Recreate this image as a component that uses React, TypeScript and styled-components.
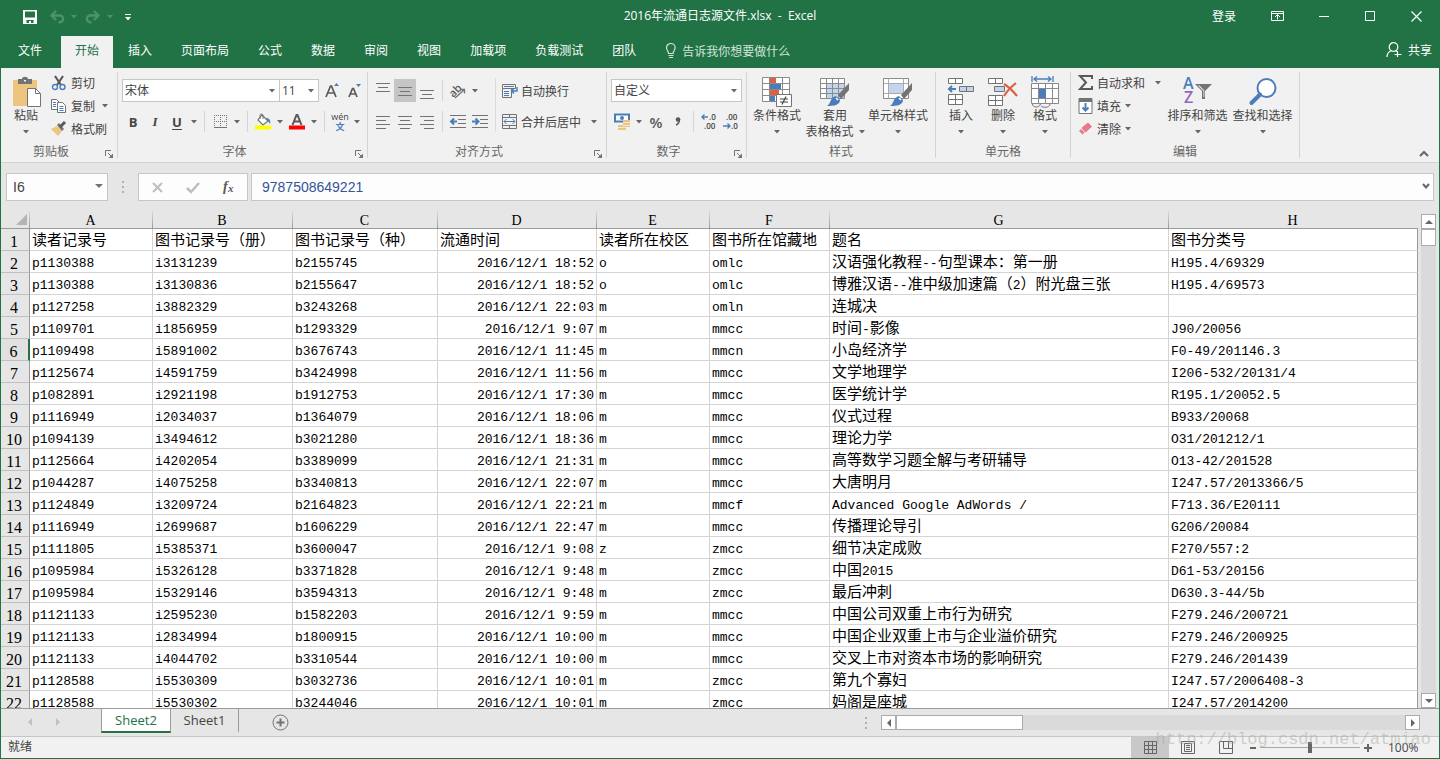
import React from "react";
import styled, { createGlobalStyle, css } from "styled-components";

const GREEN = "#217346";
const UI_FONT = `"Open Sans", "Noto Sans CJK SC", sans-serif`;
const CELL_FONT = `"Liberation Mono", "Noto Sans CJK SC", monospace`;

const GlobalStyle = createGlobalStyle`
  *, *::before, *::after { box-sizing: border-box; }
  body { margin: 0; background: #e6e6e6; font-family: ${UI_FONT}; font-size: 12px; color: #444; }
  button, select, input { font: inherit; color: inherit; }
  svg { flex: none; overflow: visible; }
`;

const Window = styled.div`
  display: flex;
  flex-direction: column;
  height: 100vh;
  border: 1px solid ${GREEN};
  border-top: 0;
  background: #e6e6e6;
  overflow: hidden;
`;

const plainButton = css`
  display: flex;
  align-items: center;
  justify-content: center;
  border: 0;
  padding: 0;
  background: none;
  white-space: nowrap;
`;

/* ---------- title bar ---------- */

const TitleBar = styled.header`
  display: grid;
  grid-template-columns: 1fr auto 1fr;
  align-items: center;
  height: 34px;
  background: ${GREEN};
  color: #fff;
`;

const QuickAccess = styled.div`
  display: flex;
  align-items: center;
  padding-left: 16px;
`;

const QuickButton = styled.button<{ $w: number; $dim?: boolean }>`
  ${plainButton}
  width: ${(p) => p.$w}px;
  height: 24px;
  color: ${(p) => (p.$dim ? "#4f916b" : "#fff")};
`;

const Title = styled.h1`
  margin: 0;
  font-size: 12px;
  font-weight: 400;
  line-height: 32px;
  height: 34px;
  white-space: pre;
`;

const WindowControls = styled.div`
  display: flex;
  justify-content: flex-end;
  height: 32px;
  align-self: start;
`;

const WindowButton = styled.button<{ $w?: number }>`
  ${plainButton}
  width: ${(p) => p.$w ?? 46}px;
  height: 32px;
  color: #fff;
`;

/* ---------- tabs ---------- */

const TabBar = styled.nav`
  display: flex;
  align-items: stretch;
  height: 34px;
  padding: 2px 7px 0 3px;
  background: ${GREEN};
`;

const Tab = styled.button<{ $active?: boolean; $first?: boolean }>`
  ${plainButton}
  margin-right: ${(p) => (p.$first ? 5 : 1)}px;
  padding: 0 14px 4px;
  background: ${(p) => (p.$active ? "#f1f1f1" : "transparent")};
  color: ${(p) => (p.$active ? GREEN : "#fff")};
`;

const TellMe = styled.button`
  ${plainButton}
  gap: 5px;
  margin-left: 14px;
  padding-bottom: 3px;
  color: #d3e3da;
`;

const Share = styled.button`
  ${plainButton}
  gap: 6px;
  margin-left: auto;
  padding-bottom: 4px;
  color: #fff;
`;

/* ---------- ribbon ---------- */

const Ribbon = styled.section`
  display: flex;
  position: relative;
  height: 95px;
  padding-top: 4px;
  background: #f1f1f1;
  border-bottom: 1px solid #d2d2d2;
`;

const GroupBox = styled.div<{ $w: number }>`
  display: flex;
  flex-direction: column;
  flex: none;
  position: relative;
  width: ${(p) => p.$w}px;
  height: 86px;
  border-right: 1px solid #d4d4d4;
`;

const GroupBody = styled.div<{ $pad?: number }>`
  display: flex;
  flex: none;
  height: 72px;
  padding-left: ${(p) => p.$pad ?? 0}px;
`;

const GroupLabel = styled.div<{ $launcher?: boolean }>`
  padding-right: ${(p) => (p.$launcher ? 16 : 0)}px;
  line-height: 16px;
  text-align: center;
  color: #666;
`;

const Launcher = styled.button`
  ${plainButton}
  position: absolute;
  right: 4px;
  bottom: 0;
  width: 8px;
  height: 8px;
`;

const Rows = styled.div`
  display: flex;
  flex-direction: column;
  gap: 8px;
  padding-top: 7px;
`;

const Row = styled.div`
  display: flex;
  align-items: center;
  height: 23px;
`;

const Stack = styled.div<{ $w: number }>`
  display: flex;
  flex-direction: column;
  flex: none;
  width: ${(p) => p.$w}px;
`;

const SmallButton = styled.button<{ $spread?: boolean }>`
  ${plainButton}
  justify-content: flex-start;
  gap: 4px;
  height: 23px;
  padding: 0 4px 2px 0;
  & > svg:last-child { margin-left: ${(p) => (p.$spread ? "auto" : "0")}; }
`;

const ToolButton = styled.button<{ $on?: boolean; $w?: number }>`
  ${plainButton}
  width: ${(p) => p.$w ?? 22}px;
  height: 23px;
  background: ${(p) => (p.$on ? "#c5c5c5" : "none")};
`;

const TextTool = styled(ToolButton)<{ $italic?: boolean; $under?: boolean }>`
  font-size: 13px;
  font-weight: 700;
  font-style: ${(p) => (p.$italic ? "italic" : "normal")};
  font-family: ${(p) => (p.$italic ? `"Liberation Serif", serif` : UI_FONT)};
  text-decoration: ${(p) => (p.$under ? "underline" : "none")};
  text-underline-offset: 2px;
`;

const PercentTool = styled(ToolButton)`
  font-size: 15px;
  font-weight: 600;
  color: #595959;
`;

const WideTool = styled.button`
  ${plainButton}
  height: 23px;
  & > svg:first-child { margin: 0 4px 0 3px; }
  & > svg:last-child:not(:first-child) { margin-left: 10px; }
`;

const WideLabel = styled.span`
  display: inline-block;
`;

const Sep = styled.span`
  flex: none;
  width: 1px;
  height: 21px;
  margin: 0 4px;
  background: #d4d4d4;
`;

const TallSep = styled.span`
  flex: none;
  width: 1px;
  height: 54px;
  margin: 6px 3px 0 4px;
  background: #dcdcdc;
`;

const SelectBox = styled.label<{ $w: number; $joined?: boolean }>`
  position: relative;
  width: ${(p) => p.$w}px;
  height: 23px;
  margin-left: ${(p) => (p.$joined ? -1 : 0)}px;
  & > svg { position: absolute; right: 5px; top: 10px; pointer-events: none; }
`;

const Select = styled.select`
  appearance: none;
  width: 100%;
  height: 100%;
  padding: 0 2px;
  border: 1px solid #c6c6c6;
  border-radius: 0;
  background: #fff;
`;

const BigButton = styled.button<{ $w: number }>`
  ${plainButton}
  flex: none;
  flex-direction: column;
  justify-content: flex-start;
  width: ${(p) => p.$w}px;
  height: 72px;
  padding-top: 3px;
`;

const BigIcon = styled.span`
  display: flex;
  align-items: center;
  justify-content: center;
  height: 33px;
`;

const BigLine = styled.span`
  display: flex;
  align-items: center;
  gap: 5px;
  height: 16px;
  line-height: 16px;
`;

const Collapse = styled.button`
  ${plainButton}
  position: absolute;
  right: 9px;
  bottom: 4px;
  width: 12px;
  height: 8px;
`;

/* ---------- formula bar ---------- */

const FormulaBar = styled.div`
  display: flex;
  align-items: center;
  flex: none;
  height: 48px;
  padding: 0 5px;
`;

const NameBox = styled.label`
  position: relative;
  width: 102px;
  height: 28px;
  & > svg { position: absolute; right: 5px; top: 9px; }
`;

const FormulaInput = styled.input<{ $pad: number }>`
  width: 100%;
  height: 28px;
  padding: 0 ${(p) => p.$pad}px;
  border: 1px solid #c6c6c6;
  background: #fdfdfd;
  color: ${(p) => (p.$pad > 8 ? "#35539a" : "#444")};
  font-family: "Liberation Sans", sans-serif;
  font-size: 14px;
`;

const Grip = styled.span`
  display: flex;
  justify-content: center;
  width: 30px;
`;

const FormulaTools = styled.div`
  display: flex;
  align-items: center;
  width: 110px;
  height: 28px;
  margin-right: 3px;
  border: 1px solid #c6c6c6;
  background: #fdfdfd;
`;

const FormulaTool = styled(ToolButton)`
  width: 36px;
  height: 26px;
`;

const FormulaField = styled.label`
  position: relative;
  flex: 1;
  & > svg { position: absolute; right: 4px; top: 10px; }
`;

/* ---------- grid ---------- */

const GridArea = styled.main`
  display: flex;
  flex: 1;
  min-height: 0;
  border-bottom: 1px solid #9b9b9b;
  overflow: hidden;
`;

const GridClip = styled.div`
  flex: 1;
  min-width: 0;
  overflow: hidden;
`;

const Table = styled.table`
  width: 100%;
  table-layout: fixed;
  border-collapse: separate;
  border-spacing: 0;
  font-family: ${CELL_FONT};
  font-size: 13px;
  color: #000;
`;

const ColHead = styled.th`
  height: 18px;
  padding: 0 2px 0 0;
  border-bottom: 1px solid #9b9b9b;
  background: linear-gradient(#dcdcdc, #9b9b9b) right / 1px 100% no-repeat #e6e6e6;
  font-weight: 400;
  font-family: "Liberation Serif", serif;
  font-size: 14px;
  line-height: 14px;
  vertical-align: bottom;
  &:last-child { background: #e6e6e6; }
`;

const Corner = styled(ColHead)`
  padding: 0 3px 3px 0;
  text-align: right;
  & > svg { display: block; margin-left: auto; }
`;

const RowHead = styled.th<{ $active?: boolean }>`
  height: 22px;
  padding: 4px 2px 0 0;
  border-right: ${(p) => (p.$active ? `2px solid ${GREEN}` : "1px solid #9b9b9b")};
  border-bottom: 1px solid #c0c0c0;
  background: ${(p) => (p.$active ? "#e1e1e1" : "#e6e6e6")};
  font-weight: 400;
  font-family: "Liberation Serif", serif;
  font-size: 16px;
  line-height: 17px;
`;

const Cell = styled.td<{ $right?: boolean }>`
  height: 22px;
  padding: 4px 2px 0;
  border-right: 1px solid #d4d4d4;
  border-bottom: 1px solid #d4d4d4;
  background: #fff;
  line-height: 17px;
  white-space: pre;
  overflow: hidden;
  text-align: ${(p) => (p.$right ? "right" : "left")};
  &:last-child { border-right-color: #9b9b9b; }
`;

const Han = styled.span`
  font-size: 15px;
`;

const VScroll = styled.div`
  display: flex;
  flex-direction: column;
  flex: none;
  width: 15px;
  margin: 3px 3px 0 3px;
  background: #dadada;
`;

const ScrollButton = styled.button`
  ${plainButton}
  flex: none;
  width: 15px;
  height: 15px;
  border: 1px solid #ababab;
  background: #fff;
  &:last-child { margin-left: auto; }
`;

const VThumb = styled.div`
  height: 17px;
  margin-bottom: auto;
  border: 1px solid #ababab;
  background: #fff;
`;

/* ---------- sheet tabs + status bar ---------- */

const SheetBar = styled.div`
  display: flex;
  flex: none;
  height: 28px;
  border-bottom: 1px solid #c6c6c6;
`;

const SheetNav = styled.div`
  display: flex;
  align-items: center;
  width: 100px;
  padding: 0 0 2px 15px;
`;

const NavButton = styled.button`
  ${plainButton}
  width: 28px;
  height: 20px;
`;

const SheetTab = styled.button<{ $active?: boolean }>`
  ${plainButton}
  width: ${(p) => (p.$active ? 70 : 68)}px;
  height: 24px;
  border-right: 1px solid #9b9b9b;
  border-left: ${(p) => (p.$active ? "1px solid #9b9b9b" : "0")};
  border-bottom: 2px solid ${(p) => (p.$active ? GREEN : "transparent")};
  background: ${(p) => (p.$active ? "#fff" : "none")};
  color: ${(p) => (p.$active ? GREEN : "#444")};
  font-size: 13px;
`;

const AddSheet = styled.button`
  ${plainButton}
  width: 18px;
  margin-left: 32px;
`;

const HScroll = styled.div`
  display: flex;
  width: 539px;
  height: 15px;
  margin: 6px 19px 0 14px;
  background: #dadada;
`;

const HGrip = styled.span`
  display: flex;
  align-items: center;
  margin-left: auto;
`;

const HThumb = styled.div`
  width: 127px;
  border: 1px solid #ababab;
  background: #fff;
`;

const StatusBar = styled.footer`
  display: flex;
  align-items: center;
  flex: none;
  position: relative;
  height: 21px;
  padding-left: 7px;
  background: #f1f1f1;
`;

const StatusText = styled.span`
  padding-bottom: 3px;
`;

const Views = styled.div`
  display: flex;
  margin-left: auto;
`;

const ViewButton = styled(ToolButton)`
  width: 38px;
  height: 21px;
  background: ${(p) => (p.$on ? "#c8c8c8" : "none")};
`;

const ZoomButton = styled(ToolButton)`
  width: 15px;
  height: 21px;
`;

const ZoomRange = styled.input`
  appearance: none;
  width: 100px;
  height: 16px;
  margin: 0;
  background: linear-gradient(#a6a6a6, #a6a6a6) center / 100% 1px no-repeat;
  &::-webkit-slider-thumb {
    appearance: none;
    width: 4px;
    height: 11px;
    background: #666;
  }
`;

const ZoomValue = styled.span`
  width: 64px;
  padding-left: 13px;
`;

const Watermark = styled.span`
  position: absolute;
  right: 8px;
  top: -8px;
  font: 17px/22px "Liberation Mono", monospace;
  color: rgba(170, 170, 160, 0.5);
  pointer-events: none;
`;

/* ---------- icons ---------- */

const G = "#737373";
const B = "#4a7ebb";

type IconProps = { w?: number; h?: number; children: React.ReactNode };
const Icon = ({ w = 16, h = 16, children }: IconProps) => (
  <svg width={w} height={h} viewBox={`0 0 ${w} ${h}`} fill="none" aria-hidden="true">
    {children}
  </svg>
);

const Caret = ({ color = "#666" }: { color?: string }) => (
  <Icon w={6} h={4}><path d="M0 0h6L3 3.5z" fill={color} /></Icon>
);
const Dots = () => (
  <Icon w={2} h={12}><path d="M0 0h2v2H0zM0 5h2v2H0zM0 10h2v2H0z" fill="#b0b0b0" /></Icon>
);
const LauncherIcon = () => (
  <Icon w={8} h={8}><path d="M.5 6V.5H6" stroke={G} /><path d="M3 3l3 3" stroke={G} /><path d="M8 3.5V8H3.5z" fill={G} /></Icon>
);
const SaveIcon = () => (
  <Icon w={14} h={14}>
    <path fillRule="evenodd" d="M0 0h14v14H0zM2 1.5v6h10v-6zM3.500 10v3H6v-2h2v2h2.500v-3z" fill="currentColor" />
  </Icon>
);
const UndoIcon = () => (
  <Icon w={15} h={14}><path d="M6 1L1.500 5.500 6 10M2 5.500h7.500c5 0 5 6.500-1 7" stroke="currentColor" strokeWidth="2.400" /></Icon>
);
const RedoIcon = () => (
  <Icon w={15} h={14}><path d="M9 1l4.500 4.500L9 10M13 5.500H5.500c-5 0-5 6.500 1 7" stroke="currentColor" strokeWidth="2.400" /></Icon>
);
const CustomizeIcon = () => (
  <Icon w={6} h={7}><path d="M0 0h6v1H0zM0 3h6L3 6.500z" fill="currentColor" /></Icon>
);
const RibbonOptionsIcon = () => (
  <Icon w={14} h={12}><path d="M.5 1.500h12v9H.5zM.5 3.500h12M6.500 9.500V5M4 7l2.500-2.500L9 7" stroke="currentColor" /></Icon>
);
const MinIcon = () => <Icon w={10} h={10}><path d="M0 5.500h10" stroke="currentColor" /></Icon>;
const MaxIcon = () => <Icon w={10} h={10}><path d="M.5.5h9v9h-9z" stroke="currentColor" /></Icon>;
const CloseIcon = () => <Icon w={11} h={11}><path d="M.5.5l10 10M10.500.5l-10 10" stroke="currentColor" strokeWidth="1.200" /></Icon>;
const BulbIcon = () => (
  <Icon w={12} h={15}><path d="M3.500 10.500C3.500 8 1.500 7.500 1.500 4.800a4.300 4.300 0 0 1 8.600 0c0 2.700-2 3.200-2 5.700zM3.500 12.500h5M4 14.500h4" stroke="currentColor" strokeWidth="1.200" /></Icon>
);
const PersonIcon = () => (
  <Icon w={16} h={16}><circle cx="7.500" cy="5" r="4.300" stroke="currentColor" strokeWidth="1.200" /><path d="M1 15c0-3 2-5.500 4.500-6.300M9.500 8.500l1.500 1M11.500 9v6M8.500 12.500h7" stroke="currentColor" strokeWidth="1.200" /></Icon>
);

const PasteIcon = () => (
  <Icon w={26} h={30}>
    <path d="M0 3h24v26H0z" fill="#ecc57f" />
    <path d="M5 2h4c0-3 6-3 6 0h4v5H5z" fill={G} />
    <path d="M11 3h2v1.500h-2z" fill="#f1f1f1" />
    <path d="M14.500 11.500h8l5 5v13h-13z" fill="#fff" stroke={G} />
    <path d="M22.500 11.500v5h5" stroke={G} />
  </Icon>
);
const CutIcon = () => (
  <Icon>
    <path d="M4 1l6 9M12 1L6 10" stroke="#595959" strokeWidth="2.200" />
    <circle cx="4" cy="12" r="2.500" stroke={B} strokeWidth="1.400" />
    <circle cx="11.500" cy="12" r="2.500" stroke={B} strokeWidth="1.400" />
  </Icon>
);
const CopyIcon = () => (
  <Icon>
    <path d="M.5 1.500h5l3 3v7h-8z" fill="#fff" stroke={G} />
    <path d="M2 4.500h3M2 6.500h3M2 8.500h3" stroke={B} />
    <path d="M6.500 4.500h5l3 3v7h-8z" fill="#fff" stroke={G} />
    <path d="M8.500 8.500h4M8.500 10.500h4M8.500 12.500h4" stroke={B} />
  </Icon>
);
const PainterIcon = () => (
  <Icon>
    <path d="M0 8l6-3 5 5-4 5z" fill="#ecc57f" />
    <path d="M6 4l2-2 5 6-2 2z" fill={G} />
    <path d="M9 6l5-5" stroke="#595959" strokeWidth="3" />
  </Icon>
);
const GrowFont = ({ down }: { down?: boolean }) => (
  <Icon w={14} h={15}>
    <path d={down ? "M1 14l3.500-8.500h1L9 14M2.500 11h5" : "M1 14L5.500 3h1L11 14M3 10h6"} stroke="#595959" strokeWidth="1.700" />
    <path d={down ? "M8 1h5l-2.500 3z" : "M9 3h5l-2.500-3z"} fill={B} />
  </Icon>
);
const BorderIcon = () => (
  <Icon w={13} h={13}>
    <path d="M.5 0v12M6.500 0v12M12.500 0v12M0 .5h13M0 6.500h13" stroke={G} strokeDasharray="1 1" />
    <path d="M0 12.500h13" stroke={G} />
  </Icon>
);
const FillIcon = () => (
  <Icon w={17} h={17}>
    <path d="M7 2l6 6-5 4-5-5z" fill="#fff" stroke={G} strokeWidth="1.200" />
    <path d="M5 6V2.500a1.500 1.500 0 0 1 3 0V6" stroke={G} />
    <path d="M11 5c3 0 5 2 4 6l-2-3z" fill={B} />
    <path d="M0 12.500h16v4H0z" fill="#ff0" />
  </Icon>
);
const FontColorIcon = () => (
  <Icon w={16} h={17}>
    <path d="M3.500 12L7.500 2h1l4 10M5 8.500h6" stroke="#595959" strokeWidth="2" />
    <path d="M0 12.500h16v4H0z" fill="red" />
  </Icon>
);
const PhoneticMark = styled.span`
  display: flex;
  flex-direction: column;
  align-items: center;
  font-size: 9px;
  line-height: 10px;
  & > b { color: ${B}; }
`;

const Lines = ({ ys, xs }: { ys: number[]; xs?: number[][] }) => (
  <Icon w={14} h={18}>
    {ys.map((y, i) => {
      const [a, b] = xs?.[i % 2] ?? [0, 14];
      return <path key={y} d={`M${a} ${y}.5H${b}`} stroke={G} />;
    })}
  </Icon>
);
const OrientIcon = () => (
  <Icon w={18} h={18}>
    <text x="0" y="12" fontSize="11" fontWeight="600" fill="#595959" transform="rotate(-45 7 9)">ab</text>
    <path d="M6 16l9-8M11.500 7.500h4v4" stroke={G} strokeWidth="1.300" />
  </Icon>
);
const IndentIcon = ({ right }: { right?: boolean }) => (
  <Icon w={16} h={14}>
    <path d="M0 .5h16M8 4.500h8M8 8.500h8M0 12.500h16" stroke={G} />
    <path d={right ? "M0 6.500h6M3.500 3.500l3 3-3 3" : "M1 6.500h6M4 3.500l-3 3 3 3"} stroke={B} strokeWidth="2" />
  </Icon>
);
const WrapIcon = () => (
  <Icon w={15} h={16}>
    <path d="M.5 1.500h13v4H.5zM.5 5.500h9v9H.5z" fill="#f1f1f1" stroke={G} />
    <path d="M2 3.500h10M2 8.500h5M2 10.500h5M2 12.500h5" stroke={B} />
    <path d="M15 4v4h-5M12 5.500L9.500 8l2.500 2.500" stroke={B} strokeWidth="1.400" />
  </Icon>
);
const MergeIcon = () => (
  <Icon w={15} h={15}>
    <path d="M.5.5h14v14H.5zM.5 3.500h14M.5 11.500h14M7.500.5v3M7.500 11.500v3" stroke={G} />
    <path d="M2 7.500h11M4.500 5l-2.500 2.500L4.500 10M10.500 5l2.500 2.500-2.500 2.500" stroke={B} />
  </Icon>
);
const MoneyIcon = () => (
  <Icon w={17} h={17}>
    <path d="M1 1.500h14v7H1z" fill="#fff" stroke={B} strokeWidth="2" />
    <circle cx="8" cy="5" r="2" fill={B} />
    <path d="M9 7h7v7h-4v3H4v-5h5z" fill="#ecc57f" />
    <path d="M9 9.500h7M9 12.500h7M4 14.500h8" stroke="#f1f1f1" strokeWidth=".8" />
  </Icon>
);
const DecimalIcon = ({ less }: { less?: boolean }) => (
  <Icon w={16} h={18}>
    <text x={less ? 3 : 8} y="7" fontSize="8" fontWeight="600" fill="#444">{less ? ".00" : ".0"}</text>
    <text x={less ? 8 : 3} y="16" fontSize="8" fontWeight="600" fill="#444">{less ? ".0" : ".00"}</text>
    <path d={less ? "M0 13h7M4.500 10.500L7 13l-2.500 2.500" : "M7 4H1M3.500 1.500L1 4l2.500 2.500"} stroke={B} strokeWidth="1.400" />
  </Icon>
);
const CondIcon = () => (
  <Icon w={30} h={31}>
    <path d="M.5 1.500h27v24H.5z" fill="#fff" />
    <path d="M8 2h6v5H8zM8 14h9v5H8z" fill="#dd6140" />
    <path d="M8 8h11v5H8zM8 20h5v5H8z" fill={B} />
    <path d="M.5 1.500h27v24H.5zM.5 7.500h27M.5 13.500h27M.5 19.500h27M7.500 1.500v24M20.500 1.500v24" stroke="#8a8a8a" />
    <path d="M14.500 18.500h15v12h-15z" fill="#fff" stroke={G} />
    <path d="M18 23h8M18 26h8M24 20.500l-4 8" stroke="#444" strokeWidth="1.200" />
  </Icon>
);
const Brush = () => (
  <>
    <path d="M29 6v7l-8 9-3-4z" fill={G} />
    <path d="M16 19l4 4c0 5-6 6-13 6 4-2 3-9 9-10z" fill={B} />
    <path d="M16 21l2 2" stroke="#fff" strokeWidth="1.500" />
  </>
);
const TableStyleIcon = () => (
  <Icon w={30} h={30}>
    <path d="M.5 1.500h24v20H.5z" fill="#fff" />
    <path d="M7 7h18v15H7z" fill="#c3d5ec" />
    <path d="M.5 1.500h24v20H.5zM.5 6.500h24M.5 11.500h24M.5 16.500h24M6.500 1.500v20M12.500 1.500v20M18.500 1.500v20" stroke="#8a8a8a" />
    <Brush />
  </Icon>
);
const CellStyleIcon = () => (
  <Icon w={30} h={30}>
    <path d="M.5 1.500h25v20H.5z" fill="#fff" stroke="#8a8a8a" />
    <path d="M.5 6.500h25M.5 16.500h25M5.500 1.500v20M20.500 1.500v20" stroke="#aaa" />
    <path d="M6 7h14v9H6z" fill="#c3d5ec" />
    <Brush />
  </Icon>
);
const InsertIcon = () => (
  <Icon w={28} h={30}>
    <path d="M1.500 1.500h14v5h-14zM8.500 1.500v5M1.500 17.500h14v10h-14zM1.500 22.500h14M8.500 17.500v10" fill="#fff" stroke={G} />
    <path d="M12.500 9.500h14v5h-14zM19.500 9.500v5" fill="#c3d5ec" stroke={G} />
    <path d="M9 12H2M5 9l-3 3 3 3" stroke={B} strokeWidth="2" />
  </Icon>
);
const DeleteIcon = () => (
  <Icon w={30} h={30}>
    <path d="M.5 1.500h14v5H.5zM7.500 1.500v5M.5 18.500h14v10H.5zM.5 23.500h14M7.500 18.500v10" fill="#fff" stroke={G} />
    <path d="M6.500 9.500h10v5h-10z" fill="#c3d5ec" stroke={G} />
    <path d="M16 7c5 3 9 7 13 12M28 6c-5 4-9 8-12 13" stroke="#dd6140" strokeWidth="2.200" />
  </Icon>
);
const FormatIcon = () => (
  <Icon w={28} h={32}>
    <path d="M.5 7.500h27v20H.5z" fill="#fff" />
    <path d="M.5 7.500h27v20H.5zM.5 12.500h27M.5 22.500h27M7.500 7.500v20M14.500 7.500v20M21.500 7.500v20" stroke="#8a8a8a" />
    <path d="M8 13h7v9H8z" fill={B} />
    <path d="M1.500 28c0 4 7 4 8 0M10 30c3 2 8 2 9-2" stroke={G} />
    <path d="M1 0v6M22 0v6M3 3h17M6 .5L3 3l3 2.500M17 .5L20 3l-3 2.500" stroke={B} strokeWidth="1.300" />
  </Icon>
);
const SumIcon = () => (
  <Icon w={15} h={15}><path d="M14 4V1H2l6 6.500L2 14h12v-3" stroke="#595959" strokeWidth="2" /></Icon>
);
const FillDownIcon = () => (
  <Icon w={15} h={16}>
    <path d="M1 .5h13v15H1z" fill="#fff" stroke={G} /><path d="M1 0h13v4H1z" fill={G} />
    <path d="M7.500 5v7M4.500 9.500l3 3 3-3" stroke={B} strokeWidth="2" />
  </Icon>
);
const EraserIcon = () => (
  <Icon w={15} h={14}>
    <path d="M4 6l6-5 3.500 3.500-6 5.500z" fill="#e8788c" stroke="#e8788c" strokeLinejoin="round" />
    <path d="M1 9l2-2 3.500 3.500-2 2z" fill="#e8788c" />
  </Icon>
);
const SortIcon = () => (
  <Icon w={30} h={32}>
    <text x="0" y="13" fontSize="16" fontWeight="600" fill={B}>A</text>
    <text x="1" y="27" fontSize="16" fontWeight="600" fill="#9467bd">Z</text>
    <path fillRule="evenodd" d="M12 8h17l-7 7v8h-3v-8zM15 9.500l5.500 5.500v6h.8v-6.500L16.500 9.500z" fill={G} />
  </Icon>
);
const FindIcon = () => (
  <Icon w={28} h={30}>
    <circle cx="17.500" cy="11" r="9" fill="#fff" stroke={B} strokeWidth="2" />
    <path d="M11 17.500L2.500 26" stroke={B} strokeWidth="4" strokeLinecap="round" />
  </Icon>
);
const Tri = ({ dir, color = "#666" }: { dir: "up" | "down" | "left" | "right"; color?: string }) => {
  const d = { up: "M0 6h8L4 2z", down: "M0 2h8L4 6z", left: "M6 0v8L2 4z", right: "M2 0v8l4-4z" }[dir];
  return <Icon w={8} h={8}><path d={d} fill={color} /></Icon>;
};

/* ---------- data ---------- */

const COLUMNS = [
  { id: "A", w: 123 }, { id: "B", w: 140 }, { id: "C", w: 145 }, { id: "D", w: 159 },
  { id: "E", w: 113 }, { id: "F", w: 120 }, { id: "G", w: 339 }, { id: "H" },
] as { id: string; w?: number }[];

const ROWS: string[][] = [
  ["读者记录号", "图书记录号（册）", "图书记录号（种）", "流通时间", "读者所在校区", "图书所在馆藏地", "题名", "图书分类号"],
  ["p1130388", "i3131239", "b2155745", "2016/12/1 18:52", "o", "omlc", "汉语强化教程--句型课本：第一册", "H195.4/69329"],
  ["p1130388", "i3130836", "b2155647", "2016/12/1 18:52", "o", "omlc", "博雅汉语--准中级加速篇（2）附光盘三张", "H195.4/69573"],
  ["p1127258", "i3882329", "b3243268", "2016/12/1 22:03", "m", "omln", "连城决", ""],
  ["p1109701", "i1856959", "b1293329", "2016/12/1 9:07", "m", "mmcc", "时间-影像", "J90/20056"],
  ["p1109498", "i5891002", "b3676743", "2016/12/1 11:45", "m", "mmcn", "小岛经济学", "F0-49/201146.3"],
  ["p1125674", "i4591759", "b3424998", "2016/12/1 11:56", "m", "mmcc", "文学地理学", "I206-532/20131/4"],
  ["p1082891", "i2921198", "b1912753", "2016/12/1 17:30", "m", "mmcc", "医学统计学", "R195.1/20052.5"],
  ["p1116949", "i2034037", "b1364079", "2016/12/1 18:06", "m", "mmcc", "仪式过程", "B933/20068"],
  ["p1094139", "i3494612", "b3021280", "2016/12/1 18:36", "m", "mmcc", "理论力学", "O31/201212/1"],
  ["p1125664", "i4202054", "b3389099", "2016/12/1 21:31", "m", "mmcc", "高等数学习题全解与考研辅导", "O13-42/201528"],
  ["p1044287", "i4075258", "b3340813", "2016/12/1 22:07", "m", "mmcc", "大唐明月", "I247.57/2013366/5"],
  ["p1124849", "i3209724", "b2164823", "2016/12/1 22:21", "m", "mmcf", "Advanced Google AdWords /", "F713.36/E20111"],
  ["p1116949", "i2699687", "b1606229", "2016/12/1 22:47", "m", "mmcc", "传播理论导引", "G206/20084"],
  ["p1111805", "i5385371", "b3600047", "2016/12/1 9:08", "z", "zmcc", "细节决定成败", "F270/557:2"],
  ["p1095984", "i5326128", "b3371828", "2016/12/1 9:48", "m", "zmcc", "中国2015", "D61-53/20156"],
  ["p1095984", "i5329146", "b3594313", "2016/12/1 9:48", "m", "zmcc", "最后冲刺", "D630.3-44/5b"],
  ["p1121133", "i2595230", "b1582203", "2016/12/1 9:59", "m", "mmcc", "中国公司双重上市行为研究", "F279.246/200721"],
  ["p1121133", "i2834994", "b1800915", "2016/12/1 10:00", "m", "mmcc", "中国企业双重上市与企业溢价研究", "F279.246/200925"],
  ["p1121133", "i4044702", "b3310544", "2016/12/1 10:00", "m", "mmcc", "交叉上市对资本市场的影响研究", "F279.246/201439"],
  ["p1128588", "i5530309", "b3032736", "2016/12/1 10:01", "m", "zmcc", "第九个寡妇", "I247.57/2006408-3"],
  ["p1128588", "i5530302", "b3244046", "2016/12/1 10:01", "m", "zmcc", "妈阁是座城", "I247.57/2014200"],
];

const TABS = ["文件", "开始", "插入", "页面布局", "公式", "数据", "审阅", "视图", "加载项", "负载测试", "团队"];

/* Han runs are set larger than the monospaced Latin runs beside them. */
const CellText = ({ value }: { value: string }) => (
  <>
    {value.split(/([^\x00-\x7f]+)/).filter(Boolean).map((run, i) =>
      run.charCodeAt(0) > 127 ? <Han key={i}>{run}</Han> : <React.Fragment key={i}>{run}</React.Fragment>
    )}
  </>
);

const Group = ({ label, w, pad, launcher, children }: {
  label: string; w: number; pad?: number; launcher?: boolean; children: React.ReactNode;
}) => (
  <GroupBox $w={w}>
    <GroupBody $pad={pad}>{children}</GroupBody>
    <GroupLabel $launcher={launcher}>{label}</GroupLabel>
    {launcher && <Launcher aria-label={label}><LauncherIcon /></Launcher>}
  </GroupBox>
);

const Drop = ({ label }: { label: string }) => <ToolButton $w={12} aria-label={label}><Caret /></ToolButton>;

const Big = ({ w, icon, lines }: { w: number; icon: React.ReactNode; lines: string[] }) => (
  <BigButton $w={w}>
    <BigIcon>{icon}</BigIcon>
    <BigLine>{lines[0]}</BigLine>
    <BigLine>{lines[1]}<Caret /></BigLine>
  </BigButton>
);

export default function App() {
  return (
    <Window>
      <GlobalStyle />
      <TitleBar>
        <QuickAccess>
          <QuickButton $w={26} aria-label="保存"><SaveIcon /></QuickButton>
          <QuickButton $w={28} $dim aria-label="撤消"><UndoIcon /></QuickButton>
          <QuickButton $w={6} $dim aria-label="撤消选项"><Caret color="#4f916b" /></QuickButton>
          <QuickButton $w={30} $dim aria-label="恢复"><RedoIcon /></QuickButton>
          <QuickButton $w={6} $dim aria-label="恢复选项"><Caret color="#4f916b" /></QuickButton>
          <QuickButton $w={30} aria-label="自定义快速访问工具栏"><CustomizeIcon /></QuickButton>
        </QuickAccess>
        <Title>{"2016年流通日志源文件.xlsx  -  Excel"}</Title>
        <WindowControls>
          <WindowButton $w={62}>登录</WindowButton>
          <WindowButton aria-label="功能区显示选项"><RibbonOptionsIcon /></WindowButton>
          <WindowButton aria-label="最小化"><MinIcon /></WindowButton>
          <WindowButton aria-label="最大化"><MaxIcon /></WindowButton>
          <WindowButton aria-label="关闭"><CloseIcon /></WindowButton>
        </WindowControls>
      </TitleBar>
      <TabBar>
        {TABS.map((t, i) => <Tab key={t} $first={i === 0} $active={i === 1}>{t}</Tab>)}
        <TellMe><BulbIcon />告诉我你想要做什么</TellMe>
        <Share><PersonIcon />共享</Share>
      </TabBar>

      <Ribbon>
        <Group label="剪贴板" w={117} launcher>
          <BigButton $w={50}>
            <BigIcon><PasteIcon /></BigIcon>
            <BigLine>粘贴</BigLine>
            <BigLine><Caret /></BigLine>
          </BigButton>
          <Stack $w={61}>
            <SmallButton><CutIcon />剪切</SmallButton>
            <SmallButton $spread><CopyIcon />复制<Caret /></SmallButton>
            <SmallButton><PainterIcon />格式刷</SmallButton>
          </Stack>
        </Group>

        <Group label="字体" w={250} pad={4} launcher>
          <Rows>
            <Row>
              <SelectBox $w={158}>
                <Select aria-label="字体" defaultValue="宋体"><option>宋体</option></Select><Caret />
              </SelectBox>
              <SelectBox $w={40} $joined>
                <Select aria-label="字号" defaultValue="11"><option>11</option></Select><Caret />
              </SelectBox>
              <ToolButton $w={26} aria-label="增大字号"><GrowFont /></ToolButton>
              <ToolButton $w={20} aria-label="减小字号"><GrowFont down /></ToolButton>
            </Row>
            <Row>
              <TextTool>B</TextTool>
              <TextTool $italic>I</TextTool>
              <TextTool $under>U</TextTool>
              <Drop label="下划线选项" />
              <Sep />
              <ToolButton aria-label="边框"><BorderIcon /></ToolButton>
              <Drop label="边框选项" />
              <Sep />
              <ToolButton aria-label="填充颜色"><FillIcon /></ToolButton>
              <Drop label="填充颜色选项" />
              <ToolButton aria-label="字体颜色"><FontColorIcon /></ToolButton>
              <Drop label="字体颜色选项" />
              <Sep />
              <ToolButton><PhoneticMark>wén<b>文</b></PhoneticMark></ToolButton>
              <Drop label="拼音选项" />
            </Row>
          </Rows>
        </Group>

        <Group label="对齐方式" w={239} pad={4} launcher>
          <Rows>
            <Row>
              <ToolButton aria-label="顶端对齐"><Lines ys={[1, 5, 9]} xs={[[0, 14], [2, 12]]} /></ToolButton>
              <ToolButton $on aria-label="垂直居中"><Lines ys={[5, 9, 13]} xs={[[0, 14], [2, 12]]} /></ToolButton>
              <ToolButton aria-label="底端对齐"><Lines ys={[8, 12, 16]} xs={[[0, 14], [2, 12]]} /></ToolButton>
              <Sep />
              <ToolButton aria-label="方向"><OrientIcon /></ToolButton>
              <Drop label="方向选项" />
            </Row>
            <Row>
              <ToolButton aria-label="左对齐"><Lines ys={[3, 7, 11, 15]} xs={[[0, 14], [0, 10]]} /></ToolButton>
              <ToolButton aria-label="居中"><Lines ys={[3, 7, 11, 15]} xs={[[0, 14], [2, 12]]} /></ToolButton>
              <ToolButton aria-label="右对齐"><Lines ys={[3, 7, 11, 15]} xs={[[0, 14], [4, 14]]} /></ToolButton>
              <Sep />
              <ToolButton aria-label="减少缩进量"><IndentIcon /></ToolButton>
              <ToolButton aria-label="增加缩进量"><IndentIcon right /></ToolButton>
            </Row>
          </Rows>
          <TallSep />
          <Rows>
            <Row><WideTool><WrapIcon /><WideLabel>自动换行</WideLabel></WideTool></Row>
            <Row><WideTool><MergeIcon /><WideLabel>合并后居中</WideLabel><Caret /></WideTool></Row>
          </Rows>
        </Group>

        <Group label="数字" w={140} pad={4} launcher>
          <Rows>
            <Row>
              <SelectBox $w={131}>
                <Select aria-label="数字格式" defaultValue="自定义"><option>自定义</option></Select><Caret />
              </SelectBox>
            </Row>
            <Row>
              <ToolButton aria-label="会计数字格式"><MoneyIcon /></ToolButton>
              <Drop label="会计数字格式选项" />
              <PercentTool>%</PercentTool>
              <ToolButton aria-label="千位分隔样式">
                <Icon w={6} h={10}><circle cx="3" cy="2.500" r="2.300" fill="#595959" /><path d="M4.500 2c0 3-1 5-3.500 6" stroke="#595959" strokeWidth="1.500" /></Icon>
              </ToolButton>
              <Sep />
              <ToolButton aria-label="增加小数位数"><DecimalIcon /></ToolButton>
              <ToolButton aria-label="减少小数位数"><DecimalIcon less /></ToolButton>
            </Row>
          </Rows>
        </Group>

        <Group label="样式" w={189} pad={3}>
          <Big w={54} icon={<CondIcon />} lines={["条件格式", ""]} />
          <Big w={62} icon={<TableStyleIcon />} lines={["套用", "表格格式"]} />
          <Big w={64} icon={<CellStyleIcon />} lines={["单元格样式", ""]} />
        </Group>

        <Group label="单元格" w={135} pad={4}>
          <Big w={42} icon={<InsertIcon />} lines={["插入", ""]} />
          <Big w={42} icon={<DeleteIcon />} lines={["删除", ""]} />
          <Big w={42} icon={<FormatIcon />} lines={["格式", ""]} />
        </Group>

        <Group label="编辑" w={229} pad={7}>
          <Stack $w={87}>
            <SmallButton $spread><SumIcon />自动求和<Caret /></SmallButton>
            <SmallButton><FillDownIcon />填充<Caret /></SmallButton>
            <SmallButton><EraserIcon />清除<Caret /></SmallButton>
          </Stack>
          <Big w={65} icon={<SortIcon />} lines={["排序和筛选", ""]} />
          <Big w={65} icon={<FindIcon />} lines={["查找和选择", ""]} />
        </Group>
        <Collapse aria-label="折叠功能区">
          <Icon w={10} h={6}><path d="M1 5l4-4 4 4" stroke="#666" strokeWidth="2" /></Icon>
        </Collapse>
      </Ribbon>

      <FormulaBar>
        <NameBox>
          <FormulaInput $pad={6} aria-label="名称框" defaultValue="I6" />
          <Tri dir="down" color={G} />
        </NameBox>
        <Grip><Dots /></Grip>
        <FormulaTools>
          <FormulaTool aria-label="取消"><Icon w={11} h={11}><path d="M1 1l9 9M10 1l-9 9" stroke="#bdbdbd" strokeWidth="2" /></Icon></FormulaTool>
          <FormulaTool aria-label="输入"><Icon w={14} h={11}><path d="M1 6l4 4 8-9" stroke="#bdbdbd" strokeWidth="2.500" /></Icon></FormulaTool>
          <FormulaTool aria-label="插入函数">
            <Icon w={14} h={14}>
              <text x="1" y="11" fontFamily="Liberation Serif" fontStyle="italic" fontWeight="700" fontSize="14" fill="#595959">f</text>
              <text x="6" y="12" fontFamily="Liberation Serif" fontStyle="italic" fontWeight="700" fontSize="11" fill="#595959">x</text>
            </Icon>
          </FormulaTool>
        </FormulaTools>
        <FormulaField>
          <FormulaInput $pad={10} aria-label="编辑栏" defaultValue="9787508649221" />
          <Icon w={8} h={7}><path d="M1 1l3 3.500L7 1" stroke="#666" strokeWidth="2" /></Icon>
        </FormulaField>
      </FormulaBar>

      <GridArea>
        <GridClip>
          <Table>
            <colgroup>
              <col width={29} />
              {COLUMNS.map((c) => <col key={c.id} width={c.w} />)}
            </colgroup>
            <thead>
              <tr>
                <Corner aria-label="全选"><Icon w={11} h={11}><path d="M11 0v11H0z" fill="#b4b4b4" /></Icon></Corner>
                {COLUMNS.map((c) => <ColHead key={c.id} scope="col">{c.id}</ColHead>)}
              </tr>
            </thead>
            <tbody>
              {ROWS.map((r, i) => (
                <tr key={i}>
                  <RowHead scope="row" $active={i === 5}>{i + 1}</RowHead>
                  {r.map((v, j) => <Cell key={j} $right={j === 3 && i > 0}><CellText value={v} /></Cell>)}
                </tr>
              ))}
            </tbody>
          </Table>
        </GridClip>
        <VScroll>
          <ScrollButton aria-label="向上滚动"><Tri dir="up" /></ScrollButton>
          <VThumb />
          <ScrollButton aria-label="向下滚动"><Tri dir="down" /></ScrollButton>
        </VScroll>
      </GridArea>

      <SheetBar>
        <SheetNav>
          <NavButton aria-label="上一个工作表"><Tri dir="left" color="#c0c0c0" /></NavButton>
          <NavButton aria-label="下一个工作表"><Tri dir="right" color="#c0c0c0" /></NavButton>
        </SheetNav>
        <SheetTab $active>Sheet2</SheetTab>
        <SheetTab>Sheet1</SheetTab>
        <AddSheet aria-label="新工作表">
          <Icon w={17} h={17}><circle cx="8.500" cy="8.500" r="7.500" stroke={G} /><path d="M8.500 4.500v8M4.500 8.500h8" stroke={G} strokeWidth="2" /></Icon>
        </AddSheet>
        <HGrip><Dots /></HGrip>
        <HScroll>
          <ScrollButton aria-label="向左滚动"><Tri dir="left" /></ScrollButton>
          <HThumb />
          <ScrollButton aria-label="向右滚动"><Tri dir="right" /></ScrollButton>
        </HScroll>
      </SheetBar>
      <StatusBar>
        <StatusText>就绪</StatusText>
        <Views>
          <ViewButton $on aria-label="普通"><Icon w={13} h={13}><path d="M.5.5h12v12H.5zM.5 4.500h12M.5 8.500h12M4.500.5v12M8.500.5v12" stroke="#666" /></Icon></ViewButton>
          <ViewButton aria-label="页面布局"><Icon w={14} h={13}><path d="M.5.5h13v12H.5zM3.500 2.500h7v8h-7zM5 4.500h4M5 6.500h4M5 8.500h4" stroke="#666" /></Icon></ViewButton>
          <ViewButton aria-label="分页预览"><Icon w={14} h={13}><path d="M.5.5h13v12H.5zM4.500.5v7h9M9.500.5v7" stroke="#666" /></Icon></ViewButton>
        </Views>
        <ZoomButton aria-label="缩小"><Icon w={6} h={2}><path d="M0 0h6v2H0z" fill="#666" /></Icon></ZoomButton>
        <ZoomRange type="range" min={0} max={100} defaultValue={50} aria-label="显示比例" />
        <ZoomButton aria-label="放大"><Icon w={8} h={8}><path d="M0 3h3V0h2v3h3v2H5v3H3V5H0z" fill="#666" /></Icon></ZoomButton>
        <ZoomValue>100%</ZoomValue>
        <Watermark>http://blog.csdn.net/atmiao</Watermark>
      </StatusBar>
    </Window>
  );
}
